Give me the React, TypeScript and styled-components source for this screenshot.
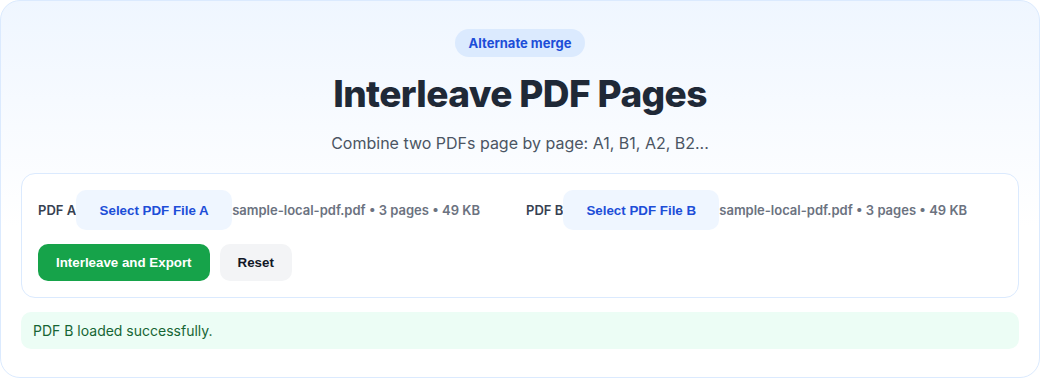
import React from 'react';
import styled, { createGlobalStyle } from 'styled-components';

const GlobalStyle = createGlobalStyle`
    * {
        box-sizing: border-box;
    }
    body {
        margin: 0;
        font-family: Inter, 'Noto Sans', sans-serif;
        background: #ffffff;
    }
`;

const Card = styled.div`
    width: 1040px;
    height: 378px;
    padding: 28px 20px;
    border: 1px solid #dbeafe;
    border-radius: 20px;
    background: linear-gradient(to bottom, #eff6ff 0%, #ffffff 60%);
    display: flex;
    flex-direction: column;
`;

const Header = styled.header`
    display: flex;
    flex-direction: column;
    align-items: center;
`;

const Badge = styled.span`
    display: inline-flex;
    align-items: center;
    height: 28px;
    padding: 0 14px;
    border-radius: 999px;
    background: #dbeafe;
    color: #1d4ed8;
    font-size: 13px;
    font-weight: 700;
`;

const Title = styled.h1`
    margin: 14px 0 0;
    font-size: 37px;
    line-height: 46px;
    font-weight: 800;
    letter-spacing: -0.6px;
    color: #1f2937;
`;

const Subtitle = styled.p`
    margin: 14px 0 0;
    font-size: 16px;
    line-height: 24px;
    color: #4b5563;
`;

const Panel = styled.section`
    margin-top: 18px;
    padding: 16px;
    border: 1px solid #dbeafe;
    border-radius: 14px;
    background: #ffffff;
    display: flex;
    flex-direction: column;
    gap: 14px;
    flex-shrink: 0;
`;

const Pickers = styled.div`
    display: grid;
    grid-template-columns: 1fr 1fr;
    gap: 12px;
`;

const Picker = styled.div`
    display: flex;
    align-items: center;
`;

const PickerLabel = styled.span`
    font-size: 13px;
    font-weight: 600;
    color: #374151;
`;

const Button = styled.button<{ variant: 'soft' | 'primary' | 'plain' }>`
    border: none;
    border-radius: 10px;
    font-family: 'Liberation Sans', Arial, sans-serif;
    font-size: 13.33px;
    font-weight: 700;
    cursor: pointer;
    padding: 0 18px;
    height: ${({ variant }) => (variant === 'soft' ? '40px' : '37px')};
    background: ${({ variant }) =>
        variant === 'soft' ? '#eff6ff' : variant === 'primary' ? '#16a34a' : '#f3f4f6'};
    color: ${({ variant }) =>
        variant === 'soft' ? '#1d4ed8' : variant === 'primary' ? '#ffffff' : '#111827'};
`;

const SelectButton = styled(Button)`
    width: 156px;
    padding: 0;
`;

const FileMeta = styled.span`
    font-size: 13px;
    font-weight: 600;
    color: #6b7280;
`;

const Actions = styled.div`
    display: flex;
    gap: 10px;
`;

const Status = styled.div`
    margin-top: 14px;
    height: 37px;
    flex-shrink: 0;
    padding: 0 12px;
    display: flex;
    align-items: center;
    border-radius: 10px;
    background: #ecfdf5;
    color: #166534;
    font-size: 14px;
`;

const files = [
    { id: 'A', meta: 'sample-local-pdf.pdf • 3 pages • 49 KB' },
    { id: 'B', meta: 'sample-local-pdf.pdf • 3 pages • 49 KB' },
];

function App() {
    return (
        <>
            <GlobalStyle />
            <Card>
                <Header>
                    <Badge>Alternate merge</Badge>
                    <Title>Interleave PDF Pages</Title>
                    <Subtitle>Combine two PDFs page by page: A1, B1, A2, B2...</Subtitle>
                </Header>
                <Panel>
                    <Pickers>
                        {files.map((f) => (
                            <Picker key={f.id}>
                                <PickerLabel>PDF {f.id}</PickerLabel>
                                <SelectButton variant="soft">Select PDF File {f.id}</SelectButton>
                                <FileMeta>{f.meta}</FileMeta>
                            </Picker>
                        ))}
                    </Pickers>
                    <Actions>
                        <Button variant="primary">Interleave and Export</Button>
                        <Button variant="plain">Reset</Button>
                    </Actions>
                </Panel>
                <Status>PDF B loaded successfully.</Status>
            </Card>
        </>
    );
}

export default App;
